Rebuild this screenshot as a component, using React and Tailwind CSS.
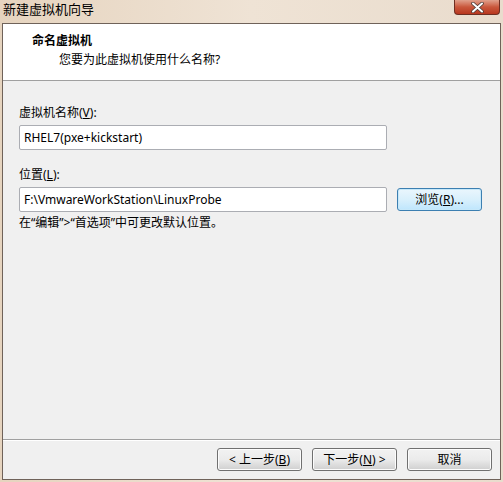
import React from 'react';

const font = { fontFamily: '"Noto Sans", "Noto Sans CJK SC", sans-serif' };

const Btn = ({ children, primary, className = '' }) => (
  <button
    className={`h-[23px] w-[85px] rounded-[3px] border text-[12px] text-black leading-none flex items-center justify-center ${
      primary
        ? 'border-[#3c7fb1] bg-gradient-to-b from-[#eaf6fd] via-[#d9f0fc] to-[#bee6fd] shadow-[inset_0_0_0_1px_#c6e8fa]'
        : 'border-[#707070] bg-gradient-to-b from-[#f2f2f2] via-[#ebebeb] to-[#cfcfcf] shadow-[inset_0_0_0_1px_#fcfcfc]'
    } ${className}`}
  >
    {children}
  </button>
);

export default function App() {
  return (
    <div
      style={font}
      className="w-[503px] h-[482px] flex flex-col bg-gradient-to-r from-[#e6d4bf] via-[#efe3d5] to-[#e9dccd] overflow-hidden"
    >
      {/* Title bar */}
      <div className="h-[23px] flex items-start justify-between shrink-0">
        <span className="pl-[3px] pt-[3px] text-[13px] leading-none text-black">新建虚拟机向导</span>
        <div className="mr-[3px] w-[46px] h-[15px] rounded-b-[4px] border border-t-0 border-[#6e2e22] bg-gradient-to-b from-[#e0a08c] via-[#c9573c] to-[#b8361e] flex items-center justify-center">
          <svg width="13" height="11" viewBox="0 0 13 11">
            <path d="M2 1.5 L11 9.5 M11 1.5 L2 9.5" stroke="#4b3c38" strokeWidth="3.6" strokeLinecap="round" />
            <path d="M2 1.5 L11 9.5 M11 1.5 L2 9.5" stroke="#ffffff" strokeWidth="2" strokeLinecap="round" />
          </svg>
        </div>
      </div>

      {/* Window client */}
      <div className="flex-1 mx-[2px] mb-[2px] border border-[#6f6259] bg-[#f0f0f0] flex flex-col">
        {/* Header */}
        <div className="h-[57px] bg-white border-b border-[#a0a0a0] pl-[29px] pt-[9px]">
          <div className="text-[12px] font-bold leading-[16px] text-black">命名虚拟机</div>
          <div className="text-[12px] leading-[16px] text-black pl-[27px] mt-[3px]">您要为此虚拟机使用什么名称?</div>
        </div>

        {/* Body */}
        <div className="flex-1 pl-[16px] pr-[18px] pt-[24px]">
          <div className="text-[12px] leading-[16px] text-black">
            虚拟机名称(<span className="underline">V</span>):
          </div>
          <div className="mt-[4px] w-[368px] h-[25px] bg-white border border-[#abadb3] rounded-[2px] flex items-center pl-[4px] text-[12px] text-black">
            RHEL7(pxe+kickstart)
          </div>

          <div className="mt-[17px] text-[12px] leading-[16px] text-black">
            位置(<span className="underline">L</span>):
          </div>
          <div className="mt-[4px] flex items-center gap-[10px]">
            <div className="w-[368px] h-[25px] bg-white border border-[#abadb3] rounded-[2px] flex items-center pl-[4px] text-[12px] text-black">
              F:\VmwareWorkStation\LinuxProbe
            </div>
            <Btn primary>
              浏览(<span className="underline">R</span>)...
            </Btn>
          </div>
          <div className="mt-[3px] text-[12px] leading-[16px] text-black">
            在“编辑”&gt;“首选项”中可更改默认位置。
          </div>
        </div>

        {/* Footer */}
        <div className="h-[40px] border-t border-[#a0a0a0] flex items-start justify-end gap-[10px] pr-[8px] pt-[8px] shadow-[inset_0_1px_0_#ffffff]">
          <Btn>
            &lt; 上一步(<span className="underline">B</span>)
          </Btn>
          <Btn>
            下一步(<span className="underline">N</span>) &gt;
          </Btn>
          <Btn>取消</Btn>
        </div>
      </div>
    </div>
  );
}
